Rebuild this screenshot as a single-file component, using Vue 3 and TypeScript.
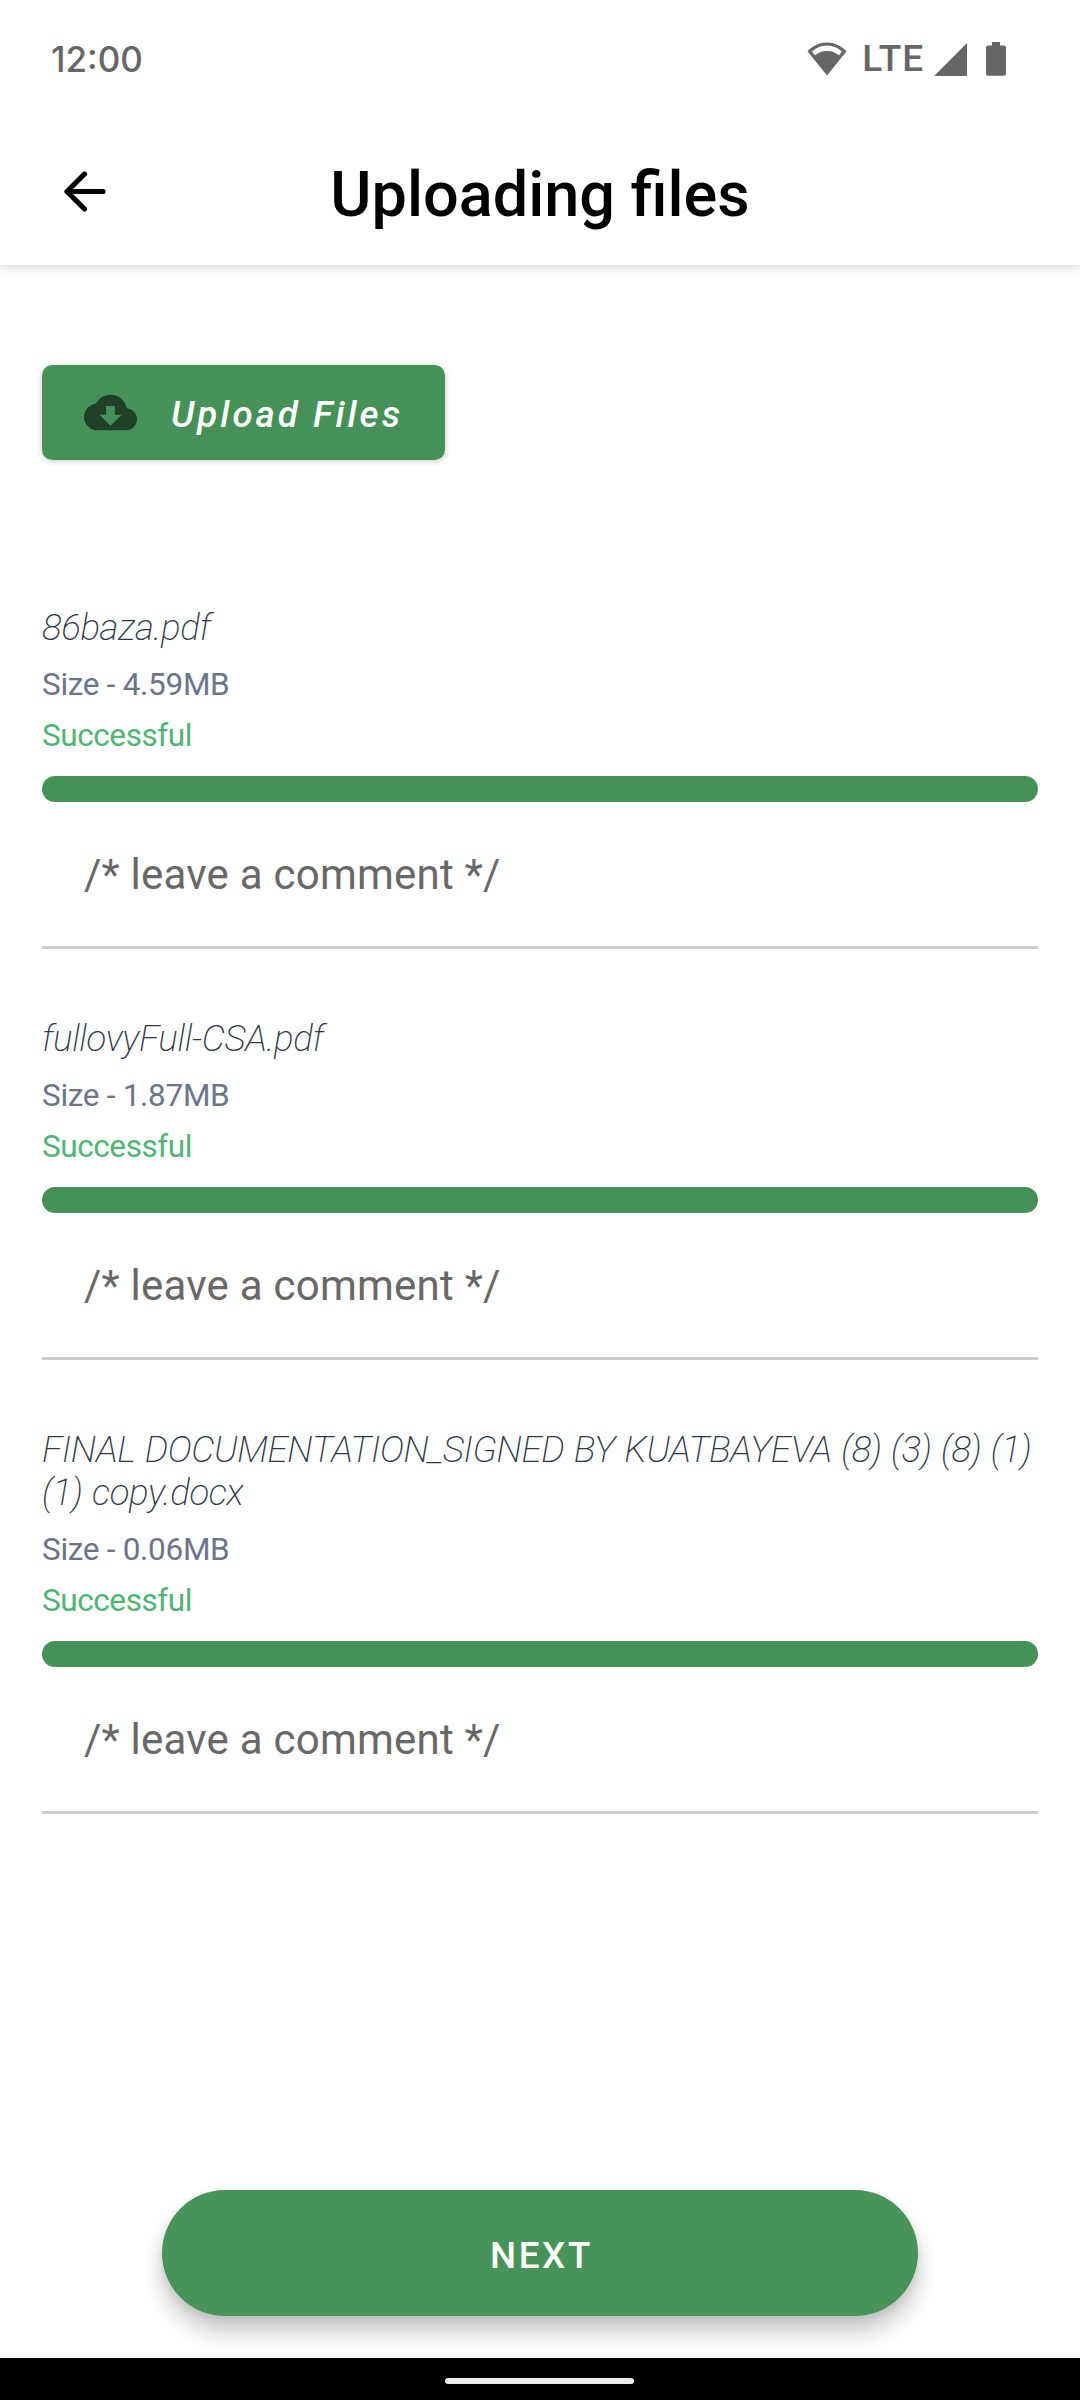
<script setup lang="ts">
import { ref } from 'vue'

interface UploadedFile {
  name: string
  size: string
  status: string
  progress: number
  comment: string
}

const files = ref<UploadedFile[]>([
  { name: '86baza.pdf', size: '4.59MB', status: 'Successful', progress: 100, comment: '' },
  { name: 'fullovyFull-CSA.pdf', size: '1.87MB', status: 'Successful', progress: 100, comment: '' },
  {
    name: 'FINAL DOCUMENTATION_SIGNED BY KUATBAYEVA (8) (3) (8) (1) (1) copy.docx',
    size: '0.06MB',
    status: 'Successful',
    progress: 100,
    comment: '',
  },
])
</script>

<template>
  <div class="screen">
    <header class="top">
      <div class="status-bar">
        <span class="clock">12:00</span>
        <div class="indicators">
          <svg class="wifi" width="40" height="34" viewBox="0 0 40 34">
            <path
              fill-rule="evenodd"
              d="M20 33.5 0.5 9.2C6 3.6 12.8 0.4 20 0.4S34 3.6 39.5 9.2ZM4.9 9.5 8 13.3C11.5 10.4 15.5 8.9 20 8.9S28.5 10.4 32 13.3L35.1 9.5C30.8 5.7 25.7 3.5 20 3.5S9.2 5.7 4.9 9.5Z"
            />
          </svg>
          <span class="network">LTE</span>
          <svg class="signal" width="33" height="33" viewBox="0 0 33 33">
            <path d="M33 0V33H0Z" />
          </svg>
          <svg class="battery" width="20" height="34" viewBox="0 0 20 34">
            <path d="M6 0H14V3.5H18A2 2 0 0 1 20 5.5V31.7A2 2 0 0 1 18 33.7H2A2 2 0 0 1 0 31.7V5.5A2 2 0 0 1 2 3.5H6Z" />
          </svg>
        </div>
      </div>
      <div class="title-bar">
        <button class="back" aria-label="Back">
          <svg width="42" height="41" viewBox="0 0 42 41">
            <path
              d="M39 20.5H3M20.5 3 3 20.5 20.5 38"
              fill="none"
              stroke="#000"
              stroke-width="5.2"
              stroke-linecap="round"
              stroke-linejoin="round"
            />
          </svg>
        </button>
        <h1>Uploading files</h1>
      </div>
    </header>

    <main>
      <button class="upload">
        <svg width="53" height="53" viewBox="0 0 24 24">
          <path
            d="M19.35 10.04C18.67 6.59 15.64 4 12 4 9.11 4 6.6 5.64 5.35 8.04 2.34 8.36 0 10.91 0 14c0 3.31 2.69 6 6 6h13c2.76 0 5-2.24 5-5 0-2.64-2.05-4.78-4.65-4.96zM17 13l-5 5-5-5h3V9h4v4h3z"
          />
        </svg>
        <span>Upload Files</span>
      </button>

      <ul class="files">
        <li v-for="file in files" :key="file.name">
          <p class="name">{{ file.name }}</p>
          <p class="meta">Size - {{ file.size }}</p>
          <p class="meta done">{{ file.status }}</p>
          <div class="track">
            <div class="bar" :style="{ width: file.progress + '%' }"></div>
          </div>
          <input v-model="file.comment" type="text" placeholder="/* leave a comment */" />
        </li>
      </ul>

      <button class="next"><span>NEXT</span></button>
    </main>

    <footer class="nav"><div class="handle"></div></footer>
  </div>
</template>

<style>
body {
  margin: 0;
  background: #fff;
}
</style>

<style scoped>
.screen {
  box-sizing: border-box;
  display: flex;
  flex-direction: column;
  width: 1080px;
  height: 2400px;
  overflow: hidden;
  background: #fff;
  font-family: Roboto, sans-serif;
}

button {
  border: 0;
  padding: 0;
  background: none;
  font-family: inherit;
}

.top {
  flex: none;
  height: 265px;
  box-shadow: 0 3px 10px rgba(0, 0, 0, 0.14);
}

.status-bar {
  display: flex;
  justify-content: space-between;
  align-items: center;
  height: 118px;
  padding: 0 74px 0 51px;
  color: #666;
}

.clock {
  font-family: Inter, sans-serif;
  font-size: 35px;
  line-height: 42px;
  font-weight: 500;
}

.indicators {
  display: flex;
  align-items: center;
}

.indicators svg {
  display: block;
  fill: #666;
}

.network {
  margin: 0 10px 0 15px;
  font-size: 37px;
  line-height: 40px;
  font-weight: 500;
  letter-spacing: 0.9px;
}

.battery {
  margin-left: 19px;
}

.title-bar {
  display: grid;
  grid-template-columns: 170px 1fr 170px;
  align-items: center;
  height: 147px;
}

.back {
  display: flex;
  padding-left: 64px;
}

h1 {
  margin: 6px 0 0;
  font-size: 63px;
  line-height: 74px;
  font-weight: 500;
  text-align: center;
  color: #000;
}

main {
  display: flex;
  flex: 1;
  flex-direction: column;
  padding: 100px 42px 42px;
}

.upload {
  display: flex;
  align-items: center;
  align-self: flex-start;
  width: 403px;
  height: 95px;
  padding-left: 42px;
  border-radius: 10.5px;
  background: #459158;
  box-shadow: 0 1px 6px rgba(0, 0, 0, 0.22);
}

.upload svg {
  flex: none;
  fill: #1f412a;
}

.upload span {
  margin: 4px 0 0 34px;
  font-size: 36.75px;
  line-height: 44px;
  font-style: italic;
  font-weight: 500;
  letter-spacing: 2.98px;
  white-space: nowrap;
  color: #fff;
}

.files {
  margin: 146px 0 0;
  padding: 0;
  list-style: none;
}

.files li {
  padding-bottom: 68px;
}

.name {
  margin: 0 0 10px;
  font-size: 36.75px;
  line-height: 43px;
  font-style: italic;
  font-weight: 200;
  letter-spacing: -0.41px;
  word-spacing: 1.1px;
  color: #2d3748;
}

.meta {
  margin: 0;
  font-size: 31.5px;
  line-height: 51px;
  letter-spacing: -0.3px;
  color: #6b7489;
}

.done {
  letter-spacing: -0.42px;
  color: #50b574;
}

.track {
  height: 26px;
  margin-top: 15px;
}

.bar {
  height: 100%;
  border-radius: 13px;
  background: #459158;
}

input {
  display: block;
  box-sizing: border-box;
  width: 100%;
  height: 147px;
  padding: 1px 42px 0;
  border: 0;
  border-bottom: 3px solid #cbcbcb;
  outline: 0;
  background: none;
  font-family: inherit;
  font-size: 42px;
  letter-spacing: 0.24px;
  color: #222;
}

input::placeholder {
  color: #686868;
  opacity: 1;
}

.next {
  flex: none;
  width: 756px;
  height: 126px;
  margin: auto auto 0;
  border-radius: 63px;
  background: #479359;
  box-shadow: 0 16px 22px rgba(0, 0, 0, 0.22), 0 2px 8px rgba(0, 0, 0, 0.08);
  color: #fff;
  font-size: 36.75px;
  font-weight: 500;
  letter-spacing: 2.6px;
}

.next span {
  display: block;
  padding: 5px 0 0 3px;
}

.nav {
  display: flex;
  flex: none;
  align-items: center;
  justify-content: center;
  height: 42px;
  padding-top: 3px;
  box-sizing: border-box;
  background: #000;
}

.handle {
  width: 189px;
  height: 6px;
  margin: 1px 2px 0 0;
  border-radius: 3px;
  background: #ebebeb;
}
</style>
